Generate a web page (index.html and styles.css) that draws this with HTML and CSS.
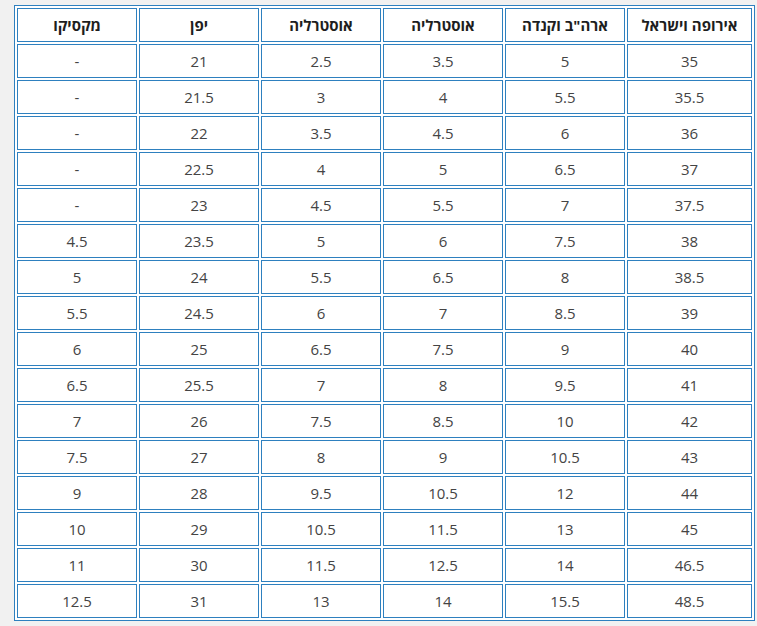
FILE: index.html
```html
<!DOCTYPE html>
<html lang="he" dir="rtl">
<head>
<meta charset="utf-8">
<title>טבלת מידות</title>
<link rel="stylesheet" href="styles.css">
</head>
<body>
<div class="page">
<table class="sizes">
<thead>
<tr><th class="wide">אירופה וישראל</th><th>ארה"ב וקנדה</th><th>אוסטרליה</th><th>אוסטרליה</th><th>יפן</th><th>מקסיקו</th></tr>
</thead>
<tbody>
<tr><td>35</td><td>5</td><td>3.5</td><td>2.5</td><td>21</td><td>-</td></tr>
<tr><td>35.5</td><td>5.5</td><td>4</td><td>3</td><td>21.5</td><td>-</td></tr>
<tr><td>36</td><td>6</td><td>4.5</td><td>3.5</td><td>22</td><td>-</td></tr>
<tr><td>37</td><td>6.5</td><td>5</td><td>4</td><td>22.5</td><td>-</td></tr>
<tr><td>37.5</td><td>7</td><td>5.5</td><td>4.5</td><td>23</td><td>-</td></tr>
<tr><td>38</td><td>7.5</td><td>6</td><td>5</td><td>23.5</td><td>4.5</td></tr>
<tr><td>38.5</td><td>8</td><td>6.5</td><td>5.5</td><td>24</td><td>5</td></tr>
<tr><td>39</td><td>8.5</td><td>7</td><td>6</td><td>24.5</td><td>5.5</td></tr>
<tr><td>40</td><td>9</td><td>7.5</td><td>6.5</td><td>25</td><td>6</td></tr>
<tr><td>41</td><td>9.5</td><td>8</td><td>7</td><td>25.5</td><td>6.5</td></tr>
<tr><td>42</td><td>10</td><td>8.5</td><td>7.5</td><td>26</td><td>7</td></tr>
<tr><td>43</td><td>10.5</td><td>9</td><td>8</td><td>27</td><td>7.5</td></tr>
<tr><td>44</td><td>12</td><td>10.5</td><td>9.5</td><td>28</td><td>9</td></tr>
<tr><td>45</td><td>13</td><td>11.5</td><td>10.5</td><td>29</td><td>10</td></tr>
<tr><td>46.5</td><td>14</td><td>12.5</td><td>11.5</td><td>30</td><td>11</td></tr>
<tr><td>48.5</td><td>15.5</td><td>14</td><td>13</td><td>31</td><td>12.5</td></tr>
</tbody>
</table>
</div>
</body>
</html>
```
FILE: styles.css
```css
html, body {
  margin: 0;
  padding: 0;
  background: #f1f1f1;
}
.page {
  padding: 5px 0 0 14px;
  direction: ltr;
}
.sizes {
  direction: rtl;
  width: 741px;
  table-layout: fixed;
  border: 1px solid #2e80bf;
  border-spacing: 2px;
  background: #ffffff;
  font-family: "Open Sans", "Noto Sans", sans-serif;
  font-size: 15px;
}
.sizes th,
.sizes td {
  box-sizing: border-box;
  height: 34px;
  padding: 0;
  border: 1px solid #2e80bf;
  text-align: center;
  vertical-align: middle;
  line-height: 20px;
}
.sizes th {
  width: 120px;
  font-weight: 700;
  color: #1e1e1e;
}
.sizes th.wide {
  width: auto;
}
.sizes td {
  font-weight: 400;
  color: #444444;
}
```
